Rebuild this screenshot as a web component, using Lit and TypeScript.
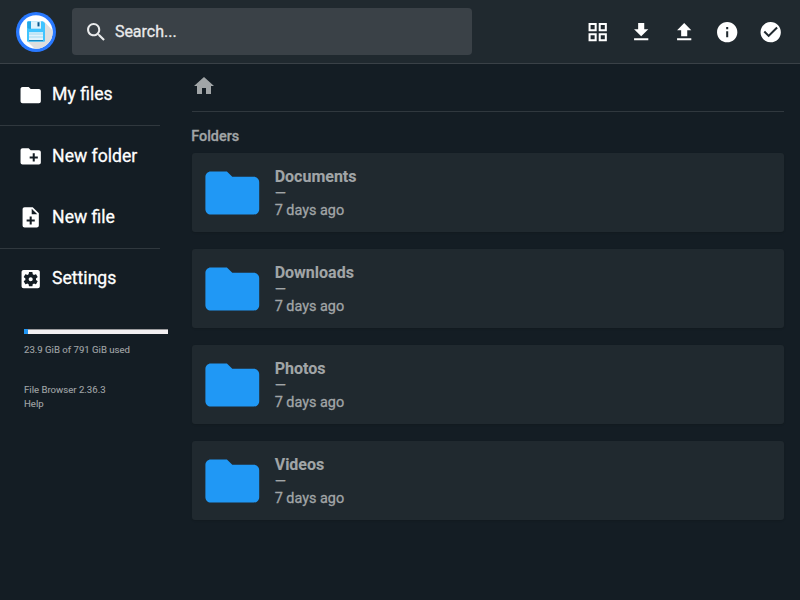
import { LitElement, html, css, svg } from "lit";
import { customElement } from "lit/decorators.js";

const icons: Record<string, string> = {
  folder: "M10 4H4c-1.1 0-1.99.9-1.99 2L2 18c0 1.1.9 2 2 2h16c1.1 0 2-.9 2-2V8c0-1.1-.9-2-2-2h-8l-2-2z",
  newFolder: "M20 6h-8l-2-2H4c-1.11 0-1.99.89-1.99 2L2 18c0 1.11.89 2 2 2h16c1.11 0 2-.89 2-2V8c0-1.11-.89-2-2-2zm-1 8h-3v3h-2v-3h-3v-2h3V9h2v3h3v2z",
  newFile: "M14 2H6c-1.1 0-1.99.9-1.99 2L4 20c0 1.1.89 2 1.99 2H18c1.1 0 2-.9 2-2V8l-6-6zm2 14h-3v3h-2v-3H8v-2h3v-3h2v3h3v2zm-3-7V3.5L18.5 9H13z",
  settings: "M12 10c-1.1 0-2 .9-2 2s.9 2 2 2 2-.9 2-2-.9-2-2-2zm7-7H5c-1.11 0-2 .9-2 2v14c0 1.1.89 2 2 2h14c1.11 0 2-.9 2-2V5c0-1.1-.89-2-2-2zm-1.75 9c0 .23-.02.46-.05.68l1.48 1.16c.13.11.17.3.08.45l-1.4 2.42c-.09.15-.27.21-.43.15l-1.74-.7c-.36.28-.76.51-1.18.69l-.26 1.85c-.03.17-.18.3-.35.3h-2.8c-.17 0-.32-.13-.35-.29l-.26-1.85c-.43-.18-.82-.41-1.18-.69l-1.74.7c-.16.06-.34 0-.43-.15l-1.4-2.42c-.09-.15-.05-.34.08-.45l1.48-1.16c-.03-.23-.05-.46-.05-.69 0-.23.02-.46.05-.68l-1.48-1.16c-.13-.11-.17-.3-.08-.45l1.4-2.42c.09-.15.27-.21.43-.15l1.74.7c.36-.28.76-.51 1.18-.69l.26-1.85c.03-.17.18-.3.35-.3h2.8c.17 0 .32.13.35.29l.26 1.85c.43.18.82.41 1.18.69l1.74-.7c.16-.06.34 0 .43.15l1.4 2.42c.09.15.05.34-.08.45l-1.48 1.16c.03.23.05.46.05.69z",
  search: "M15.5 14h-.79l-.28-.27C15.41 12.59 16 11.11 16 9.5 16 5.91 13.09 3 9.5 3S3 5.91 3 9.5 5.91 16 9.5 16c1.61 0 3.09-.59 4.23-1.57l.27.28v.79l5 4.99L20.49 19l-4.99-5zm-6 0C7.01 14 5 11.99 5 9.5S7.01 5 9.5 5 14 7.01 14 9.5 11.99 14 9.5 14z",
  grid: "M3 3v8h8V3H3zm6 6H5V5h4v4zm-6 4v8h8v-8H3zm6 6H5v-4h4v4zm4-16v8h8V3h-8zm6 6h-4V5h4v4zm-6 4v8h8v-8h-8zm6 6h-4v-4h4v4z",
  download: "M19 9h-4V3H9v6H5l7 7 7-7zM5 18v2h14v-2H5z",
  upload: "M9 16h6v-6h4l-7-7-7 7h4zm-4 2h14v2H5z",
  info: "M12 2C6.48 2 2 6.48 2 12s4.48 10 10 10 10-4.48 10-10S17.52 2 12 2zm1 15h-2v-6h2v6zm0-8h-2V7h2v2z",
  check: "M12 2C6.48 2 2 6.48 2 12s4.48 10 10 10 10-4.48 10-10S17.52 2 12 2zm-2 15l-5-5 1.41-1.41L10 14.17l7.59-7.59L19 8l-9 9z",
  home: "M10 20v-6h4v6h5v-8h3L12 3 2 12h3v8z",
};

const icon = (name: string) =>
  html`<svg class="icon" viewBox="0 0 24 24">${svg`<path d=${icons[name]} />`}</svg>`;

@customElement("app-root")
export class AppRoot extends LitElement {
  static styles = css`
    :host { display: block; height: 600px; overflow: hidden; background: #141d24; color: #fff; font-family: Roboto, sans-serif; font-size: 16px; -webkit-text-stroke: .3px currentColor; }
    * { box-sizing: border-box; }
    .icon { display: block; flex: none; width: 24.4px; height: 24.4px; fill: currentColor; stroke: none; }
    header { height: 64px; display: flex; align-items: center; padding: 0 17.5px 0 16px; background: #20292f; border-bottom: 1px solid #3a4147; }
    .logo { display: block; width: 40px; height: 40px; margin-right: 16px; }
    .search { width: 400px; height: 47px; display: flex; align-items: center; gap: 6.8px; padding-left: 11.7px; border-radius: 4px; background: #3a4147; color: #eaebec; }
    .search .icon, .actions .icon { position: relative; top: .5px; }
    .actions .icon:first-child, .actions .icon:last-child { transform: translateX(.5px); }
    .actions { margin-left: auto; display: flex; gap: 18.8px; }
    .body { display: flex; }
    nav { width: 160px; height: 536px; flex: none; }
    .group { border-bottom: 1px solid #30383e; }
    .group.last { border: 0; }
    .item { height: 61px; display: flex; align-items: center; gap: 9.4px; padding-left: 18.3px; font-size: 17.6px; line-height: 24px; }
    .item span { margin-bottom: 1px; }
    .item .icon { position: relative; top: .5px; transform: translateX(.5px); }
    .group:nth-child(2) .icon { transform: translate(.5px, -.8px); }
    .group.last .item { padding-bottom: 2px; }
    .credits { padding-left: 24px; font-size: 9.6px; line-height: 14px; color: #a1a5a7; -webkit-text-stroke-width: .1px; }
    .bar { width: 144px; height: 5px; margin: 19px 0 9px; background: #f2eff1; border-top: 1px solid #9b9b9d; }
    .fill { height: 5px; margin-top: -1px; background: #2196f3; }
    .bar { display: flow-root; border-top: 0; box-shadow: inset 0 1px #9b9b9d; }
    .fill { margin-top: 0; }
    .version { margin-top: 26px; }
    main { flex: 1; padding: 0 16px 0 32px; color: #a1a5a7; }
    .crumbs { height: 48px; display: flex; align-items: center; border-bottom: 1px solid #30383e; }
    .crumbs .icon { width: 24px; height: 24px; margin-bottom: 3px; }
    h2 { margin: 16px 0 7px -.8px; font-size: 14.4px; font-weight: 500; line-height: 18px; }
    .card { height: 79px; margin-bottom: 17px; display: flex; align-items: center; gap: 10.4px; padding-left: 7.7px; border-radius: 3px; background: #20292f; box-shadow: 0 1px 2px rgba(0,0,0,.12); }
    .card .icon { width: 64.6px; height: 64.6px; color: #2098f5; transform: translateY(.7px); }
    .card p { margin: 0; }
    .name { font-size: 16px; font-weight: 700; line-height: 19px; -webkit-text-stroke-width: .1px; }
    .size { font-size: 14.4px; line-height: 15px; }
    .time { font-size: 14.4px; line-height: 18px; position: relative; top: 1px; }
  `;

  private item(name: string, label: string) {
    return html`<div class="item">${icon(name)}<span>${label}</span></div>`;
  }

  render() {
    return html`
      <header>
        <svg class="logo" viewBox="0 0 40 40">
          <defs><clipPath id="disc"><circle cx="20" cy="20" r="16.7" /></clipPath></defs>
          <circle cx="20" cy="20" r="20" fill="#2979ff" />
          <circle cx="20" cy="20" r="16.7" fill="#fff" />
          <path d="M28 9.5L42 24V42H24L11.5 29.5z" fill="#dedede" clip-path="url(#disc)" />
          <path d="M11 10.2q0-1 1-1h15l2 2v17.6q0 1-1 1H12q-1 0-1-1z" fill="#40c4ff" />
          <path d="M11.4 10.2l.8-.6h2.8v7.1h-2.2l-1.4-1z" fill="#23a6e2" />
          <path d="M15 9.2h10v7.5H15z" fill="#dff3fc" />
          <path d="M21.5 10.2h2v4.2h-2z" fill="#07598d" />
          <path d="M13 20.2h14v8.4H13z" fill="#e1f3fc" />
          <path d="M13 22h14M13 25h14" stroke="#9fd8f0" stroke-width="1" />
          <path d="M13 28.6h14" stroke="#087db8" stroke-width="1" />
        </svg>
        <div class="search">${icon("search")}<span>Search...</span></div>
        <div class="actions">${["grid", "download", "upload", "info", "check"].map(icon)}</div>
      </header>
      <div class="body">
        <nav>
          <div class="group">${this.item("folder", "My files")}</div>
          <div class="group">${this.item("newFolder", "New folder")}${this.item("newFile", "New file")}</div>
          <div class="group last">${this.item("settings", "Settings")}</div>
          <div class="credits">
            <div class="bar"><div class="fill" style="width: ${(23.9 / 791) * 100}%"></div></div>
            <div>23.9 GiB of 791 GiB used</div>
            <div class="version">File Browser 2.36.3</div>
            <div>Help</div>
          </div>
        </nav>
        <main>
          <div class="crumbs">${icon("home")}</div>
          <h2>Folders</h2>
          ${["Documents", "Downloads", "Photos", "Videos"].map(
            (name) => html`<div class="card">
              ${icon("folder")}
              <div><p class="name">${name}</p><p class="size">—</p><p class="time">7 days ago</p></div>
            </div>`
          )}
        </main>
      </div>
    `;
  }
}
